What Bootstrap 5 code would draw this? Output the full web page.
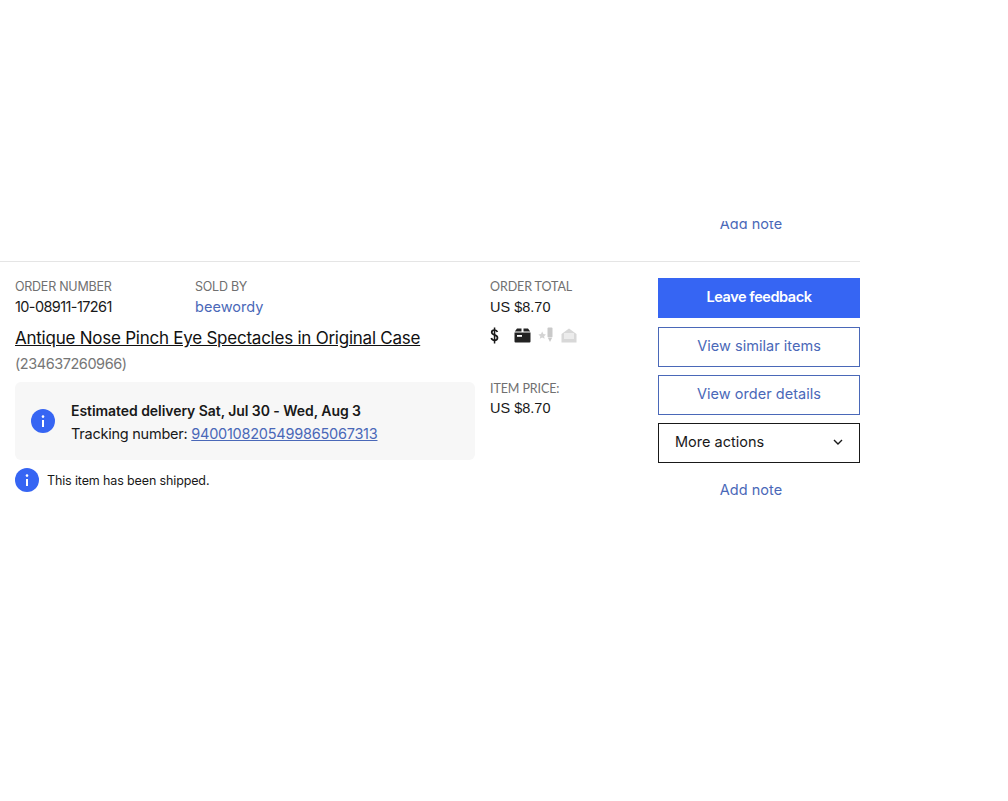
<!DOCTYPE html>
<html lang="en">
<head>
<meta charset="utf-8">
<title>Order</title>
<link href="https://cdn.jsdelivr.net/npm/bootstrap@5.3.0/dist/css/bootstrap.min.css" rel="stylesheet">
<style>
html,body{background:#fff;}
body{font-family:Inter,"Liberation Sans",sans-serif;color:#191919;font-size:14.5px;line-height:20px;height:801px;overflow:hidden;}
.page-wrap{width:860px;padding-top:221px;}
.clip-note{height:13px;overflow:hidden;margin-left:658px;width:186px;text-align:center;}
.clip-note a{display:block;margin-top:-7px;line-height:20px;}
a.blue-link{color:#4a68b8;text-decoration:none;letter-spacing:.05px;}
.order-row{border-top:1px solid #e5e5e5;margin-top:27px;padding:16px 0 0 15px;gap:15px;}
.col-main{width:460px;}
.col-total{width:153px;}
.col-acts{width:202px;gap:8px;}
.lbl{font-size:12.5px;color:#707070;line-height:18px;letter-spacing:-.25px;}
.lbl-lato{font-family:Lato,sans-serif;font-size:12.5px;letter-spacing:-.1px;}
.lbl-price{margin-top:35px;margin-bottom:-1px;}
.val{line-height:22px;letter-spacing:-.6px;}
.val-ar{font-family:"Liberation Sans",sans-serif;font-size:14.5px;line-height:22px;}
.order-col{width:180px;}
.item-title{font-size:17px;line-height:24px;color:#111;text-decoration:underline;letter-spacing:-.24px;margin-top:8px;display:block;}
.item-id{color:#767676;letter-spacing:-.45px;line-height:20px;margin-top:4px;}
.ship-box{background:#f7f7f7;border-radius:6px;height:78px;margin-top:8px;padding:0 16px;gap:16px;}
.info-dot{flex:none;display:block;}
.ship-text{padding-top:2px;}
.eta{font-weight:600;font-size:14px;letter-spacing:-.06px;line-height:23px;}
.trk{line-height:23px;letter-spacing:-.24px;}
.trk a{color:#4a68b8;}
.shipped{font-size:12.5px;letter-spacing:-.13px;gap:8px;margin-top:8px;}
.shipped span{padding-top:2px;}
.icons-line{margin-top:7px;height:20px;}
.ico-dollar{margin-right:15px;}
.ico-box{margin-right:7px;}
.ico-mic{margin-right:8px;}
.act{height:40px;border-radius:0;font-size:14.5px;padding:0 0 2px;display:flex;align-items:center;justify-content:center;}
.act-primary{background:#3665f3;border:1px solid #3665f3;color:#fff;font-weight:600;letter-spacing:-.45px;margin-bottom:1px;}
.act-outline{background:#fff;border:1px solid #4a68b8;color:#4a68b8;letter-spacing:.03px;}
.act-more{background:#fff;border:1px solid #191919;color:#191919;justify-content:space-between;padding:0 15px 2px 16px;letter-spacing:0;}
.note-line{text-align:center;width:186px;margin-top:9px;}
</style>
</head>
<body>
<div class="page-wrap">
  <div class="clip-note"><a class="blue-link" href="#">Add note</a></div>
  <div class="order-row d-flex">
    <div class="col-main">
      <div class="d-flex">
        <div class="order-col"><div class="lbl">ORDER NUMBER</div><div class="val">10-08911-17261</div></div>
        <div><div class="lbl">SOLD BY</div><div class="val"><a class="blue-link" href="#">beewordy</a></div></div>
      </div>
      <a class="item-title" href="#">Antique Nose Pinch Eye Spectacles in Original Case</a>
      <div class="item-id">(234637260966)</div>
      <div class="ship-box d-flex align-items-center">
        <svg class="info-dot" width="24" height="24" viewBox="0 0 24 24"><circle cx="12" cy="12" r="12" fill="#3665f3"/><rect x="11" y="11" width="2" height="7" fill="#fff"/><circle cx="12" cy="7.6" r="1.3" fill="#fff"/></svg>
        <div class="ship-text">
          <div class="eta">Estimated delivery Sat, Jul 30 - Wed, Aug 3</div>
          <div class="trk">Tracking number: <a href="#">9400108205499865067313</a></div>
        </div>
      </div>
      <div class="shipped d-flex align-items-center">
        <svg class="info-dot" width="24" height="24" viewBox="0 0 24 24"><circle cx="12" cy="12" r="12" fill="#3665f3"/><rect x="11" y="11" width="2" height="7" fill="#fff"/><circle cx="12" cy="7.6" r="1.3" fill="#fff"/></svg>
        <span>This item has been shipped.</span>
      </div>
    </div>
    <div class="col-total">
      <div class="lbl lbl-lato">ORDER TOTAL</div>
      <div class="val-ar">US $8.70</div>
      <div class="icons-line d-flex align-items-center">
        <svg class="ico-dollar" width="9" height="17" viewBox="0 0 9 17"><path d="M7.4 5C7 3.7 5.9 3.1 4.5 3.1 2.9 3.1 1.7 3.9 1.7 5.3c0 3.3 5.8 1.9 5.8 5.5 0 1.5-1.3 2.5-3 2.5-1.6 0-2.8-.8-3.2-2.2" fill="none" stroke="#191919" stroke-width="1.7"/><rect x="3.8" y="0.5" width="1.5" height="16" fill="#191919"/></svg>
        <svg class="ico-box" width="17" height="15" viewBox="0 0 17 15"><path d="M3 .5h4.5v3H.8zM9.5.5H14l2.2 3H9.5z" fill="#222"/><path d="M.5 4.5h16v9a1 1 0 0 1-1 1H1.500a1 1 0 0 1-1-1z" fill="#222"/><rect x="3" y="7" width="5" height="1.800" fill="#fff"/></svg>
        <svg class="ico-mic" width="15" height="16" viewBox="0 0 15 16"><path d="M4.200 4.500l1.200 2.500 2.600.4-1.900 1.800.5 2.600-2.400-1.200-2.400 1.200.5-2.600L.4 7.400 3 7z" fill="#d4d4d4"/><rect x="9.500" y="0.500" width="5" height="10" rx="1" fill="#c9c9c9"/><path d="M10 11h4l-2 4z" fill="#c9c9c9"/></svg>
        <svg width="16" height="15" viewBox="0 0 16 15"><path d="M.5 6L8 .5 15.500 6v8.500H.5z" fill="#d8d8d8"/><path d="M3 5h10v6H3z" fill="#ececec"/></svg>
      </div>
      <div class="lbl lbl-lato lbl-price">ITEM PRICE:</div>
      <div class="val-ar">US $8.70</div>
    </div>
    <div class="col-acts d-flex flex-column">
      <a class="btn act act-primary" href="#">Leave feedback</a>
      <a class="btn act act-outline" href="#">View similar items</a>
      <a class="btn act act-outline" href="#">View order details</a>
      <button type="button" class="btn act act-more">More actions
        <svg width="12" height="12" viewBox="0 0 12 12"><path d="M2 4l4 4 4-4" fill="none" stroke="#191919" stroke-width="1.400"/></svg>
      </button>
      <div class="note-line"><a class="blue-link" href="#">Add note</a></div>
    </div>
  </div>
</div>
<script src="https://cdn.jsdelivr.net/npm/bootstrap@5.3.0/dist/js/bootstrap.bundle.min.js"></script>
</body>
</html>
